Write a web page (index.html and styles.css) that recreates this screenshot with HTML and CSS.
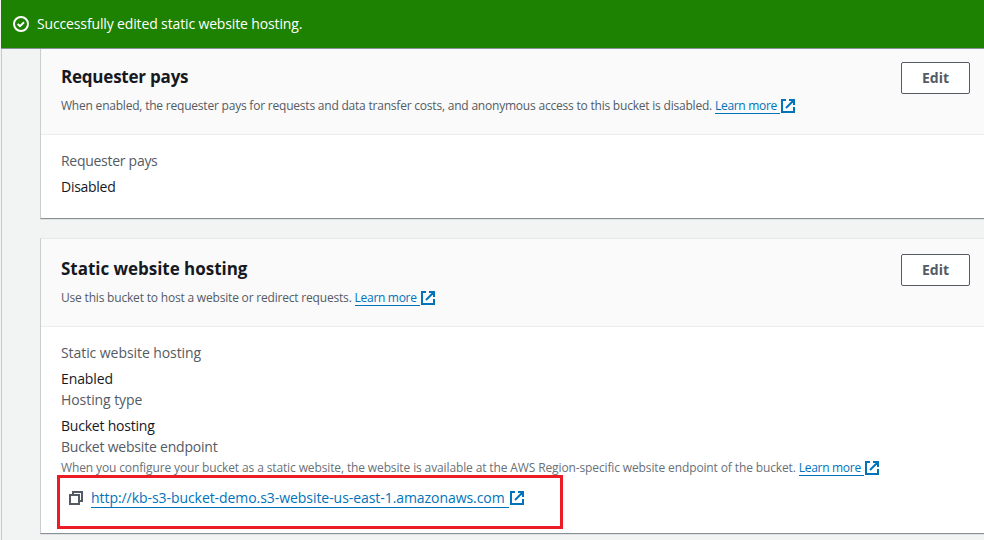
FILE: index.html
```html
<!DOCTYPE html>
<html lang="en">
<head>
<meta charset="utf-8">
<title>Bucket properties</title>
<link rel="stylesheet" href="styles.css">
</head>
<body>
<svg width="0" height="0" class="defs"><symbol id="ext" viewBox="0 0 16 16"><path d="M9 2h5v5M6 10l8-8M14 9v5H2V2h4" fill="none" stroke="currentColor" stroke-width="2"/></symbol></svg>
<div class="flash"><svg class="check" viewBox="0 0 16 16"><circle cx="8" cy="8" r="7"/><path d="M4.7 8l2.3 2.2 4-4"/></svg><span>Successfully edited static website hosting.</span></div>
<main>
<section class="card first">
<header><div><h2 class="h-pays">Requester pays</h2><p class="desc"><span class="d1">When enabled, the requester pays for requests and data transfer costs, and anonymous access to this bucket is disabled.</span> <a class="learn">Learn more<svg class="ext"><use href="#ext"/></svg></a></p></div><button>Edit</button></header>
<div class="body"><div class="label tight">Requester pays</div><div class="value tight">Disabled</div></div>
</section>
<section class="card second">
<header><div><h2>Static website hosting</h2><p class="desc"><span class="d2">Use this bucket to host a website or redirect requests.</span> <a class="learn">Learn more<svg class="ext"><use href="#ext"/></svg></a></p></div><button>Edit</button></header>
<div class="body"><div class="label">Static website hosting</div><div class="value">Enabled</div><div class="label">Hosting type</div><div class="value snug">Bucket hosting</div><div class="label snug">Bucket website endpoint</div>
<p class="desc hint"><span class="d3">When you configure your bucket as a static website, the website is available at the AWS Region-specific website endpoint of the bucket.</span> <a class="learn">Learn more<svg class="ext"><use href="#ext"/></svg></a></p>
<div class="endpoint"><svg class="copy" viewBox="0 0 16 16"><path d="M2 5h9v9H2zM5 5V2h9v9h-3"/></svg><a class="url">http://kb-s3-bucket-demo.s3-website-us-east-1.amazonaws.com<svg class="ext"><use href="#ext"/></svg></a></div></div>
</section>
</main>
</body>
</html>
```
FILE: styles.css
```css
* { box-sizing: border-box; }
body { margin: 0; height: 540px; overflow: hidden; background: #f2f3f3; font: 14px/22px "Open Sans", sans-serif; color: #16191f; }
.defs { display: block; height: 0; }
.flash { height: 49px; margin-left: 1px; background: #1d8102; border-bottom: 1px solid #879196; color: #fff; display: flex; align-items: center; padding-left: 12px; font-weight: 500; letter-spacing: -.14px; }
.check { width: 16px; height: 16px; margin-right: 8px; fill: none; stroke: #fff; stroke-width: 2; }
main { margin-left: 1px; border-left: 1px solid #c5cbcb; padding-left: 38px; height: 491px; }
.card { border: 1px solid #e4e8e8; border-left-color: #c9cece; border-right: 0; border-bottom-color: #879196; background: #fff; box-shadow: 0 1px 0 rgba(0,28,36,.08); }
.first { height: 170px; border-top: 0; }
.second { margin-top: 19px; height: 296px; }
header { display: flex; justify-content: space-between; background: #fafafa; border-bottom: 1px solid #eaeded; height: 88px; padding: 15px 14px 0 20px; }
.first header { height: 86px; padding-top: 13px; }
h2 { margin: 4px 0 0; font-size: 17px; line-height: 22px; font-weight: 700; letter-spacing: -.03px; }
.h-pays { letter-spacing: -.22px; }
.desc { margin: 10px 0 0; font-size: 12px; line-height: 16px; color: #545b64; white-space: nowrap; display: flex; }
.d1 { letter-spacing: -.21px; }
.d2 { letter-spacing: -.19px; }
.d3 { letter-spacing: -.125px; color: #687078; }
button { width: 69px; height: 32px; background: #fff; border: 1px solid #545b64; border-radius: 2px; color: #545b64; font: 700 14px/20px "Open Sans", sans-serif; padding: 0; }
.body { padding: 15px 20px 0; }
.label { height: 22px; color: #545b64; letter-spacing: -.07px; }
.value { margin-top: 4px; height: 21px; letter-spacing: -.1px; }
.tight { letter-spacing: -.28px; }
.snug { letter-spacing: -.21px; }
a { color: #0073bb; }
.learn, .url { display: inline-flex; border-bottom: 1px solid #0073bb; }
.learn { margin-left: 3px; height: 16px; letter-spacing: -.3px; }
.ext { width: 16px; height: 16px; margin: 0 -17px 0 4px; flex: none; }
.learn .ext { margin: 0 -16px 0 3px; }
.hint { margin-top: 2px; height: 15px; }
.endpoint { display: flex; align-items: flex-start; width: 506px; height: 54px; margin: 0 0 0 -4px; border: 3px solid #ed1c24; padding: 12px 0 0 8px; }
.copy { width: 16px; height: 16px; fill: none; stroke: #545b64; stroke-width: 2; }
.url { margin-left: 7px; line-height: 16px; height: 18px; letter-spacing: -.06px; }
.url .ext { margin: 0 -16px 0 4px; }
```
